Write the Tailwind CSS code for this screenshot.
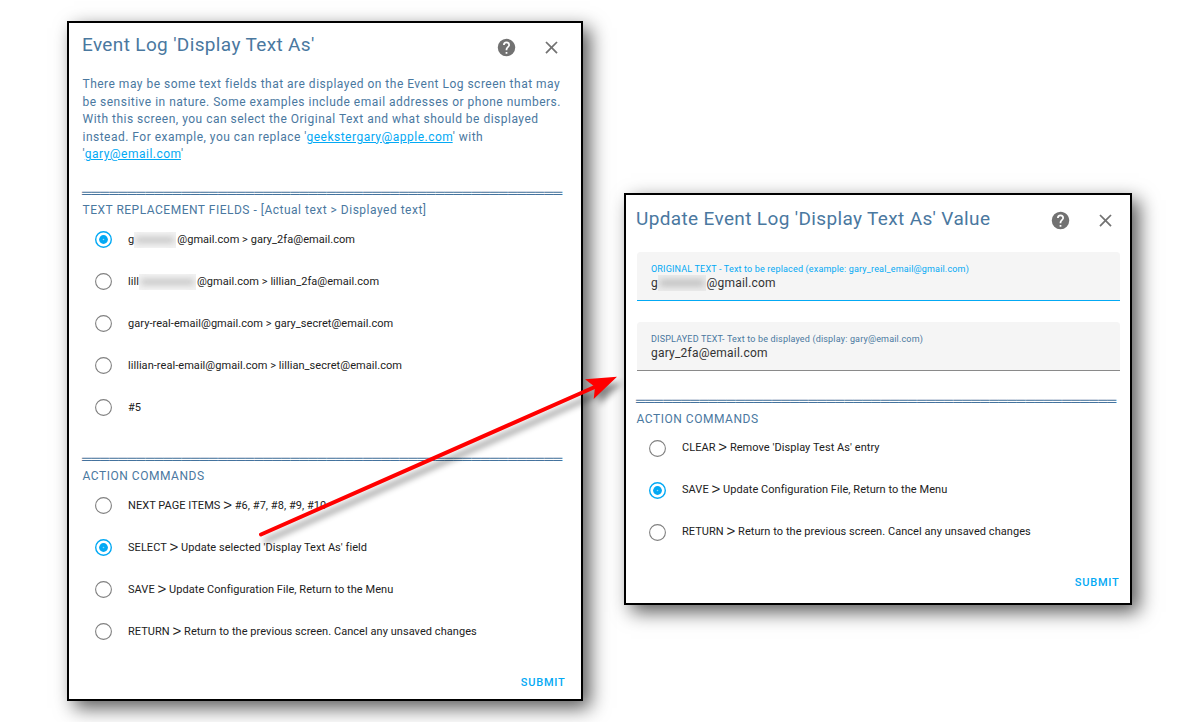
<!DOCTYPE html>
<html lang="en">
<head>
<meta charset="utf-8">
<title>Event Log 'Display Text As'</title>
<script src="https://cdn.jsdelivr.net/npm/@tailwindcss/browser@4"></script>
</head>
<body class="relative h-[722px] w-[1200px] overflow-hidden bg-white font-['Roboto',sans-serif] text-[#4a789f]">
<svg class="hidden">
  <symbol id="help" viewBox="0 0 24 24"><path d="M15.07,11.25L14.17,12.17C13.45,12.89 13,13.5 13,15H11V14.5C11,13.39 11.45,12.39 12.17,11.67L13.41,10.41C13.78,10.05 14,9.55 14,9C14,7.89 13.1,7 12,7A2,2 0 0,0 10,9H8A4,4 0 0,1 12,5A4,4 0 0,1 16,9C16,9.88 15.64,10.67 15.07,11.25M13,19H11V17H13M12,2A10,10 0 0,0 2,12A10,10 0 0,0 12,22A10,10 0 0,0 22,12C22,6.47 17.5,2 12,2Z"/></symbol>
  <symbol id="close" viewBox="0 0 24 24"><path d="M19,6.41L17.59,5L12,10.59L6.41,5L5,6.41L10.59,12L5,17.59L6.41,19L12,13.41L17.59,19L19,17.59L13.41,12L19,6.41Z"/></symbol>
  <symbol id="off" viewBox="0 0 17 17"><circle cx="8.5" cy="8.5" r="7.9" fill="#fff" stroke="#808080" stroke-width="1.1"/></symbol>
  <symbol id="on" viewBox="0 0 17 17"><circle cx="8.5" cy="8.5" r="7.8" fill="#fff" stroke="#03a9f4" stroke-width="1.4"/><circle cx="8.5" cy="8.5" r="4.4" fill="#03a9f4"/><circle cx="8.5" cy="8.5" r=".8" fill="#8fd8fa"/></symbol>
</svg>
<main class="flex items-start gap-[41px] pl-[67px] pt-[21px]">

  <section class="flex h-[680px] w-[516px] shrink-0 flex-col border-2 border-black bg-white pl-[13px] shadow-[7px_7px_18px_rgba(0,0,0,0.65)]">
    <header class="flex h-[49px] items-center">
      <h1 class="-mt-[5px] w-[413.5px] whitespace-nowrap text-[19px] leading-6 tracking-[0.36px]">Event Log 'Display Text As'</h1>
      <svg class="size-[21px] fill-[#727272]"><use href="#help"/></svg>
      <svg class="ml-6 size-[21px] fill-[#727272]"><use href="#close"/></svg>
    </header>
    <p class="ml-[0.5px] mt-[4px] whitespace-nowrap text-[12px] leading-[17.5px] tracking-[0.49px]">There may be some text fields that are displayed on the Event Log screen that may<br>be sensitive in nature. Some examples include email addresses or phone numbers.<br>With this screen, you can select the Original Text and what should be displayed<br>instead. For example, you can replace '<a class="text-[#03a9f4] underline">geekstergary@apple.com</a>' with<br>'<a class="text-[#03a9f4] underline">gary@email.com</a>'</p>
    <div class="mt-[23.5px] h-[14px] whitespace-nowrap font-['Liberation_Mono',monospace] text-[15px] leading-4 tracking-[0.06px] text-[#44739e]">═════════════════════════════════════════════════════</div>
    <h2 class="ml-[0.5px] whitespace-nowrap text-[12px] leading-[18px] tracking-[0.5px]">TEXT REPLACEMENT FIELDS - [Actual text &gt; Displayed text]</h2>
    <ul class="flex flex-col pl-[13px] text-[11px] tracking-[0.05px] text-[#212121]">
      <li class="flex h-[42px] items-center gap-4"><svg class="mb-px size-[17px]"><use href="#on"/></svg><span class="flex items-center whitespace-nowrap">g<i class="mr-px flex h-4 w-[42px] items-center overflow-hidden bg-[#f3f3f3] px-0.5"><b class="h-1.5 w-full bg-[#c4c4c4] blur-[3px]"></b></i>@gmail.com &gt; gary_2fa@email.com</span></li>
      <li class="flex h-[42px] items-center gap-4"><svg class="mb-px size-[17px]"><use href="#off"/></svg><span class="flex items-center whitespace-nowrap">lill<i class="mr-px flex h-4 w-[57px] items-center overflow-hidden bg-[#f3f3f3] px-0.5"><b class="h-1.5 w-full bg-[#c4c4c4] blur-[3px]"></b></i>@gmail.com &gt; lillian_2fa@email.com</span></li>
      <li class="flex h-[42px] items-center gap-4"><svg class="mb-px size-[17px]"><use href="#off"/></svg><span>gary-real-email@gmail.com &gt; gary_secret@email.com</span></li>
      <li class="flex h-[42px] items-center gap-4"><svg class="mb-px size-[17px]"><use href="#off"/></svg><span>lillian-real-email@gmail.com &gt; lillian_secret@email.com</span></li>
      <li class="flex h-[42px] items-center gap-4"><svg class="mb-px size-[17px]"><use href="#off"/></svg><span>#5</span></li>
    </ul>
    <div class="mt-[24px] h-[14px] whitespace-nowrap font-['Liberation_Mono',monospace] text-[15px] leading-4 tracking-[0.06px] text-[#44739e]">═════════════════════════════════════════════════════</div>
    <h2 class="ml-[0.5px] whitespace-nowrap text-[12px] leading-[18px] tracking-[0.53px]">ACTION COMMANDS</h2>
    <ul class="flex flex-col pl-[13px] text-[11px] tracking-[0.05px] text-[#212121]">
      <li class="flex h-[42px] items-center gap-4"><svg class="mb-px size-[17px]"><use href="#off"/></svg><span>NEXT PAGE ITEMS <span class="inline-block w-[8.8px] text-center align-[-1px] font-['Liberation_Sans',sans-serif] text-[15px] leading-3">&gt;</span> #6, #7, #8, #9, #10</span></li>
      <li class="flex h-[42px] items-center gap-4"><svg class="mb-px size-[17px]"><use href="#on"/></svg><span>SELECT <span class="inline-block w-[8.8px] text-center align-[-1px] font-['Liberation_Sans',sans-serif] text-[15px] leading-3">&gt;</span> Update selected 'Display Text As' field</span></li>
      <li class="flex h-[42px] items-center gap-4"><svg class="mb-px size-[17px]"><use href="#off"/></svg><span>SAVE <span class="inline-block w-[8.8px] text-center align-[-1px] font-['Liberation_Sans',sans-serif] text-[15px] leading-3">&gt;</span> Update Configuration File, Return to the Menu</span></li>
      <li class="flex h-[42px] items-center gap-4"><svg class="mb-px size-[17px]"><use href="#off"/></svg><span>RETURN <span class="inline-block w-[8.8px] text-center align-[-1px] font-['Liberation_Sans',sans-serif] text-[15px] leading-3">&gt;</span> Return to the previous screen. Cancel any unsaved changes</span></li>
    </ul>
    <button class="mr-[15.5px] mt-[21px] self-end text-[11px] font-medium leading-[18px] tracking-[0.78px] text-[#03a9f4]">SUBMIT</button>
  </section>

  <section class="mt-[172px] flex h-[412px] w-[508px] shrink-0 flex-col border-2 border-black bg-white pl-[10px] shadow-[7px_7px_18px_rgba(0,0,0,0.65)]">
    <header class="flex h-[51px] items-center">
      <h1 class="-mt-[4px] w-[414px] whitespace-nowrap text-[19px] leading-6 tracking-[0.36px]">Update Event Log 'Display Text As' Value</h1>
      <svg class="size-[21px] fill-[#727272]"><use href="#help"/></svg>
      <svg class="ml-6 size-[21px] fill-[#727272]"><use href="#close"/></svg>
    </header>
    <div class="ml-px mt-[6px] flex h-[49px] w-[483px] flex-col rounded-t-[3.5px] border-b border-[#03a9f4] bg-[#f5f5f5] pl-[14px] pt-[10px]">
      <label class="text-[9px] leading-[14px] tracking-[0.17px] text-[#03a9f4]">ORIGINAL TEXT - Text to be replaced (example: gary_real_email@gmail.com)</label>
      <span class="flex h-[14px] items-center text-[12px] tracking-[0.217px] text-[#333]">g<i class="mr-[0.5px] flex h-4 w-[48px] items-center overflow-hidden bg-[#ebebeb] px-0.5"><b class="h-1.5 w-full bg-[#bcbcbc] blur-[3px]"></b></i>@gmail.com</span>
    </div>
    <div class="ml-px mt-[21px] flex h-[49px] w-[483px] flex-col rounded-t-[3.5px] border-b border-[#8a8a8a] bg-[#f5f5f5] pl-[14px] pt-[10px]">
      <label class="text-[9px] leading-[14px] tracking-[0.17px]">DISPLAYED TEXT- Text to be displayed (display: gary@email.com)</label>
      <span class="flex h-[14px] items-center text-[12px] tracking-[0.217px] text-[#333]">gary_2fa@email.com</span>
    </div>
    <div class="mt-[24px] h-[15px] whitespace-nowrap font-['Liberation_Mono',monospace] text-[15px] leading-4 tracking-[0.06px] text-[#44739e]">═════════════════════════════════════════════════════</div>
    <h2 class="ml-[0.5px] whitespace-nowrap text-[12px] leading-[18px] tracking-[0.53px]">ACTION COMMANDS</h2>
    <ul class="-mt-px flex flex-col pl-[13px] text-[11px] tracking-[0.05px] text-[#212121]">
      <li class="flex h-[42px] items-center gap-4"><svg class="size-[17px]"><use href="#off"/></svg><span>CLEAR <span class="inline-block w-[8.8px] text-center align-[-1px] font-['Liberation_Sans',sans-serif] text-[15px] leading-3">&gt;</span> Remove 'Display Test As' entry</span></li>
      <li class="flex h-[42px] items-center gap-4"><svg class="size-[17px]"><use href="#on"/></svg><span>SAVE <span class="inline-block w-[8.8px] text-center align-[-1px] font-['Liberation_Sans',sans-serif] text-[15px] leading-3">&gt;</span> Update Configuration File, Return to the Menu</span></li>
      <li class="flex h-[42px] items-center gap-4"><svg class="size-[17px]"><use href="#off"/></svg><span>RETURN <span class="inline-block w-[8.8px] text-center align-[-1px] font-['Liberation_Sans',sans-serif] text-[15px] leading-3">&gt;</span> Return to the previous screen. Cancel any unsaved changes</span></li>
    </ul>
    <button class="mr-[10.5px] mt-[21px] self-end text-[11px] font-medium leading-[18px] tracking-[0.78px] text-[#03a9f4]">SUBMIT</button>
  </section>
</main>

<svg class="pointer-events-none absolute left-0 top-0 h-[722px] w-[1200px]">
  <g class="drop-shadow-[5px_6px_3px_rgba(0,0,0,0.45)]">
    <path d="M261 534.5L597 386" stroke="#f00" stroke-width="4" stroke-linecap="round"/>
    <path d="M617 376.7L585 379.3L595 387L593.7 399Z" fill="#f00"/>
  </g>
</svg>
</body>
</html>
